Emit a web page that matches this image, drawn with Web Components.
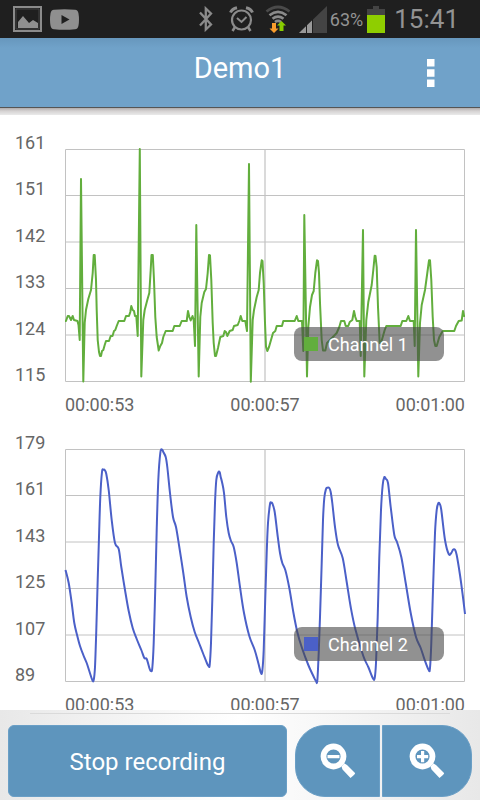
<!DOCTYPE html>
<html lang="en">
<head>
<meta charset="utf-8">
<meta name="viewport" content="width=device-width, initial-scale=1">
<title>Demo1</title>
<style>
html, body { margin: 0; height: 100%; }
body { font-family: Roboto, "Liberation Sans", sans-serif; background: #fff; }
</style>
</head>
<body>
<recorder-app></recorder-app>

<template id="status-bar">
<style>
:host { display: flex; align-items: center; justify-content: space-between; height: 38px; padding: 0 21px 0 13px; background: #1f1f1f; color: #939393; flex: none; }
div { display: flex; align-items: center; }
svg { display: block; }
.left { gap: 8px; }
.alarm { margin-left: 16px; }
.wifi { margin-left: 11px; }
.signal { margin-left: 8px; }
.percent { margin-left: 3px; font-size: 18px; line-height: 38px; margin-top: 2px; }
.battery { margin-left: 4px; }
time { margin-left: 9px; font-size: 26px; line-height: 38px; }
</style>
<div class="left">
<svg width="29" height="26" viewBox="0 0 29 26"><path fill="none" stroke="#8b8b8b" stroke-width="2" d="M1 1h27v24H1z"/><path fill="none" stroke="#444" d="M3 3h23v20H3z"/><path fill="#8f8f8f" d="M5 22v-6l5-6 6 7 4-3 5 3v5z"/></svg>
<svg width="29" height="21" viewBox="0 0 29 21"><path fill="#8f8f8f" d="M4 .8Q14.500-.5 25 .8 28 1 28.500 4.500q1 6 0 12Q28 20 25 20.200q-10.500 1-21 0Q1 20 .5 16.500q-1-6 0-12Q1 1 4 .8z"/><path fill="#1f1f1f" d="M11.500 6v9l8-4.500z"/></svg>
</div>
<div>
<svg width="14" height="26" viewBox="0 0 14 26"><path fill="none" stroke="#8b8b8b" stroke-width="2.300" d="M1 6.500l11 12-5.200 5V2.500l5.200 5-11 12"/></svg>
<svg class="alarm" width="25" height="26" viewBox="0 0 25 26"><g fill="none" stroke="#8b8b8b"><circle cx="12.500" cy="14" r="9.500" stroke-width="2.200"/><path stroke-width="2" d="M8 12l4.500 4 5-5"/><path stroke-width="3" d="M1.500 6.500Q3 3 8 1.800M23.500 6.500Q22 3 17 1.800"/><path stroke-width="2.500" d="M6 21l-2.500 4M19 21l2.500 4"/></g></svg>
<svg class="wifi" width="26" height="28" viewBox="0 0 26 28"><g fill="none" stroke-width="2.700"><path stroke="#4a4a4a" d="M1.500 6.500Q13-2.500 24.500 6.500"/><path stroke="#8b8b8b" d="M4.500 10.300Q13 3.500 21.500 10.300M7.500 13.800Q13 9.500 18.500 13.800M10 17Q13 14.800 16 17"/></g><path fill="#fa9d2d" d="M7 18h4v5.500h2.500L9 28l-4.500-4.500H7z"/><path fill="#8c0" d="M14.500 26h4v-5.500H21L16.500 16 12 20.500h2.500z"/></svg>
<svg class="signal" width="28" height="27" viewBox="0 0 28 27"><path fill="#444" d="M28 0v27H0z"/><path fill="#999" d="M14 13.500V27H0z"/><path stroke="#1f1f1f" d="M7.500 19v8M13.500 12v15"/></svg>
<span class="percent">63%</span>
<svg class="battery" width="18" height="27" viewBox="0 0 18 27"><path fill="#444" d="M0 3h6V0h6v3h6v24H0z"/><path fill="#8fce00" d="M0 9h18v18H0z"/></svg>
<time>15:41</time>
</div>
</template>

<template id="title-bar">
<style>
:host { display: block; flex: none; }
header { display: grid; grid-template-columns: 1fr auto 1fr; align-items: start; height: 70px; background: linear-gradient(#6797bd, #70a2c9 10px); border-bottom: 1px solid #555; box-sizing: border-box; }
h1 { grid-column: 2; margin: 12px 0 0; font-size: 29px; line-height: 36px; font-weight: 400; color: #fff; }
button { justify-self: end; margin: 12px 37px 0 0; padding: 0; width: 24px; height: 46px; border: 0; background: none; }
svg { display: block; margin: auto; }
.shade { height: 7px; background: linear-gradient(#b0acac, #d5d2d2 3px, #eaeaea); }
</style>
<header><h1><slot></slot></h1><button type="button" aria-label="Menu"><svg width="8" height="28" viewBox="0 0 8 28"><path fill="#fff" d="M0 0h7.500v7.500H0zM0 10.200h7.500v7.500H0zM0 20.500h7.500V28H0z"/></svg></button></header>
<div class="shade"></div>
</template>

<template id="signal-chart">
<style>
:host { display: block; margin: 0 15px 18px 0; font-size: 18px; line-height: 20px; color: #666; }
.body { display: grid; grid-template-columns: 50px 1fr; padding-left: 15px; }
.values { display: flex; flex-direction: column; justify-content: space-between; height: 252px; }
.plot { position: relative; margin: 16px 0 4px; height: 232px; }
.plot > svg { display: block; width: 100%; height: 100%; overflow: visible; }
path { fill: none; vector-effect: non-scaling-stroke; }
.grid { stroke: #c2c2c2; stroke-width: 1; }
.mid { stroke: #dadada; stroke-width: 2; }
.line { stroke: var(--line); stroke-width: 2; stroke-linejoin: round; }
.times { display: flex; justify-content: space-between; margin: 10px 0 0 65px; }
.legend { position: absolute; right: 21px; bottom: 20px; display: flex; align-items: center; gap: 10px; box-sizing: border-box; width: 150px; height: 34px; padding-left: 10px; border-radius: 8px; background: rgba(72,72,72,.6); color: #fff; }
.legend i { width: 14px; height: 14px; background: var(--line); }
.legend span { padding-top: 2px; }
</style>
<div class="body">
<div class="values"></div>
<div class="plot">
<svg preserveAspectRatio="none" viewBox="0 0 400 232"><path class="mid" d="M200 0V232"/><path class="grid" d="M.5 .5H399.500M.5 46.500H399.500M.5 93H399.500M.5 139.500H399.500M.5 186H399.500M.5 232.500H399.500M.5 .5V232.500M399.500 .5V232.500"/><g><path class="line"/></g></svg>
<div class="legend"><i></i><span><slot></slot></span></div>
</div>
</div>
<div class="times"></div>
</template>

<template id="record-controls">
<style>
:host { display: block; flex: none; background: linear-gradient(90deg, #e8e8e8, #fff 50%, #e8e8e8); padding: 3px 8px; }
hr { margin: 0 22px 11px; border: 0; height: 1px; background: #dadada; }
.row { display: grid; grid-template-columns: 1fr 85px 90px; column-gap: 2px; }
button { height: 72px; border: 1px solid #6a9fc6; padding: 0; margin: 0; background: #5e95bd; color: #fff; font: 24px/30px Roboto, "Liberation Sans", sans-serif; }
.stop { margin-right: 6px; padding-top: 2px; border-radius: 6px; }
.out { border-radius: 30px 0 0 30px; }
.in { border-radius: 0 30px 30px 0; }
svg { display: block; margin: auto; }
</style>
<hr>
<div class="row">
<button type="button" class="stop">Stop recording</button>
<button type="button" class="out" aria-label="Zoom out"><svg width="36" height="36" viewBox="0 0 36 36"><circle cx="13.500" cy="13.500" r="10" fill="none" stroke="#fff" stroke-width="5.800"/><path fill="#fff" d="M7.500 12h12v3.200h-12zM21.500 23.500l3-3 2.500 1.500 8 8q.8 1-4.500 5l-8-8.500z"/></svg></button>
<button type="button" class="in" aria-label="Zoom in"><svg width="36" height="36" viewBox="0 0 36 36"><circle cx="13.500" cy="13.500" r="10" fill="none" stroke="#fff" stroke-width="5.800"/><path fill="#fff" d="M8 12h4V8h3.200v4h4v3.200h-4v4H12v-4H8zM21.500 23.500l3-3 2.500 1.500 8 8q.8 1-4.500 5l-8-8.500z"/></svg></button>
</div>
</template>

<template id="recorder-app">
<style>
:host { display: flex; flex-direction: column; height: 100vh; }
main { flex: 1; min-height: 0; overflow: hidden; padding-top: 18px; background: #fff; }
.ecg { --line: #62ae3d; }
.pulse { --line: #4b60c8; }
</style>
<status-bar></status-bar>
<title-bar>Demo1</title-bar>
<main>
<signal-chart class="ecg" values="161 151 142 133 124 115" base="149" points="65,321 66,321 67.700,316 69,316 71,320 72.700,316 74,320 77.500,321 78.500,325 79.700,340 81,179 83.300,381.500 84.700,323 86,310 88.300,299 91,290 92.700,273 93.700,255 94.700,255 96,280 96.700,310 97.700,340 99,352 100,356 101,356 102,351 103.300,350 104.700,345 106,341 109,341 110.700,336 112.500,336 114,331 115.300,330 116.700,326 118.700,321 124.300,321 126,316 129,316 130.300,312 131.300,306 132.700,310 134,311 135,316 136.300,316 137.700,336 139.800,149 141.300,376.500 143.300,320 144.700,310 147.300,300 149.300,293 150.700,270 151.500,255 152.800,255 154,280 155.300,317 156.700,337 158.700,350.500 160.300,346 162,343 163.300,337 165.700,331 172.700,331 174.300,326 179.700,326 181.700,321 186.700,321 188,311 189.300,317 190.700,320.500 192.500,316 193.700,320 195,346 196.300,225 198.700,376.500 200.300,317 201.700,303 204.300,292 206,289 207.700,273 209,255 210,255.500 211.300,280 212.700,323 213.700,343 215,356 216,356 218,348 220.300,337 223.300,336 224.700,331 226,332 227.300,336 229.700,331 232.700,330 234,326 237.700,325 239.300,321 240.700,316 242.300,321 245.300,321 247,331 249,164 250.800,381.700 252.700,320 254,310 256.700,297 258.700,290 260,273 261.700,260.300 262.500,261 263.700,283 265,323 266,346.700 267.300,351 269,347 271,340 273,333 275.300,331 276.700,326 282,326 283.300,321 294.700,321 296.700,316 298.300,321 302,321 303.300,351 304.300,215 307,376.500 308.300,327 310,307 312,295 313.700,291 315.300,273 317,260.300 318,261 319,273 320,303 321.700,340 323,350.500 325.300,350.500 327,343 330,340 336.700,333 339.300,327 341,321 344.300,321 345.700,326 348.300,326 349.700,322 352.300,320 354,311 355.300,317 356.700,321 359.700,321 360.700,356 363,230 364.300,376.500 366.300,320 368.300,302 371.700,285 373.300,270 374.700,255.700 375.500,256 376.700,267 378,307 379.700,343 381,343 384.700,330 386.300,326 400.700,326 402.300,321 406.300,321 408.300,316 410,321 413.700,321 414.700,346 416,230 418.300,376.500 420,323 421.700,305 425,290 427.300,273 429,260.300 430,260.300 431.300,280 432.700,317 434,340 435.300,346 436.700,346 439.300,337 442.700,331 454.300,331 456,326 458.700,321 461.700,320.500 463,311 464,316 465,316">Channel 1</signal-chart>
<signal-chart class="pulse" smooth values="179 161 143 125 107 89" base="449" points="65.500,570 68.700,583 71.700,603 74.300,623 77.300,636 80,646 83.300,655 86.700,663 89.300,671 92.300,680 93.700,680 95,667 96.300,630 97.700,580 99,537 100.300,497 102,472 103.300,469.700 104.700,470 106.300,474 108.700,490 111.700,520 115,543 118.700,549 121.300,567 125,590 128.700,611 132.700,628 136.700,639 141.300,650 144.300,658 146.700,659 149.700,669 151,671 152.300,668 153.700,643 155.300,587 156.700,530 158.300,480 160.300,453 162,449.500 163.300,452 165.700,457 167.300,467 170,493 173,517 176,527 179.300,547 183.300,573 186.700,597 190.700,617 194.700,632 199,643 203.300,654 207.300,664 208.700,666 209.700,665 211,643 212.300,600 213.700,543 215,503 216.300,480 218.300,472.300 219.700,472.300 220.700,477 222,482 224,493 226.300,517 228.700,533 231,541 233.700,547 236.700,563 240,587 244,613 249.300,636 254.700,650 258.300,663 261,673 262.300,671 263.700,650 265.300,597 266.700,553 268,523 270,504 271,503 272.300,503.300 274.700,512 277.300,533 280,553 282.300,563 285.300,570 289.300,588 293.300,612 297.300,632 302,648 308.300,665 314.300,678 316,681 317.300,681 318.700,653 320,617 321.700,563 323,520 324.300,498 326,489 327.300,487.700 329.300,488 330.700,492 332.300,503 335,527 338,545 342.700,558 346.700,582 350.700,607 355.300,629 363.300,656 368.300,667 373,678.500 374.700,678 376,663 377.700,617 379.300,557 381,510 382.700,485 384.300,477.300 385.700,478.700 388,483 390.700,507 394.300,535 397,542 401.300,557 405.700,583 410.700,613 416,637 420.700,648 424.700,660 428.700,670 430,668 431.300,643 433,590 435,533 436.700,510 438.300,503.300 439.700,504 441.300,510 445,540 448.700,554 451.300,553 453,549.700 455,549.700 456.700,555 460,575 462.700,595 465,614">Channel 2</signal-chart>
</main>
<record-controls></record-controls>
</template>

<script>
class TemplateElement extends HTMLElement {
  constructor() {
    super();
    const template = document.getElementById(this.localName);
    this.attachShadow({ mode: "open" }).append(template.content.cloneNode(true));
  }
}
class StatusBar extends TemplateElement {}
class TitleBar extends TemplateElement {}
class RecordControls extends TemplateElement {}
class RecorderApp extends TemplateElement {}

// Catmull-Rom spline through the samples, written as cubic segments.
function smoothPath(points) {
  const p = points.split(" ").map(pair => pair.split(",").map(Number));
  let d = "M" + p[0];
  for (let i = 0; i < p.length - 1; i++) {
    const a = p[Math.max(i - 1, 0)], b = p[i], c = p[i + 1], e = p[Math.min(i + 2, p.length - 1)];
    d += `C${b[0] + (c[0] - a[0]) / 6},${b[1] + (c[1] - a[1]) / 6} ${c[0] - (e[0] - b[0]) / 6},${c[1] - (e[1] - b[1]) / 6} ${c}`;
  }
  return d;
}

class SignalChart extends TemplateElement {
  connectedCallback() {
    const root = this.shadowRoot;
    const fill = (selector, texts) => root.querySelector(selector).replaceChildren(...texts.map(text => {
      const span = document.createElement("span");
      span.textContent = text;
      return span;
    }));
    fill(".values", this.getAttribute("values").split(" "));
    fill(".times", ["00:00:53", "00:00:57", "00:01:00"]);
    const points = this.getAttribute("points");
    root.querySelector("g").setAttribute("transform", `translate(-65 -${this.getAttribute("base")})`);
    root.querySelector(".line").setAttribute("d", this.hasAttribute("smooth") ? smoothPath(points) : "M" + points);
  }
}
customElements.define("status-bar", StatusBar);
customElements.define("title-bar", TitleBar);
customElements.define("signal-chart", SignalChart);
customElements.define("record-controls", RecordControls);
customElements.define("recorder-app", RecorderApp);
</script>
</body>
</html>
